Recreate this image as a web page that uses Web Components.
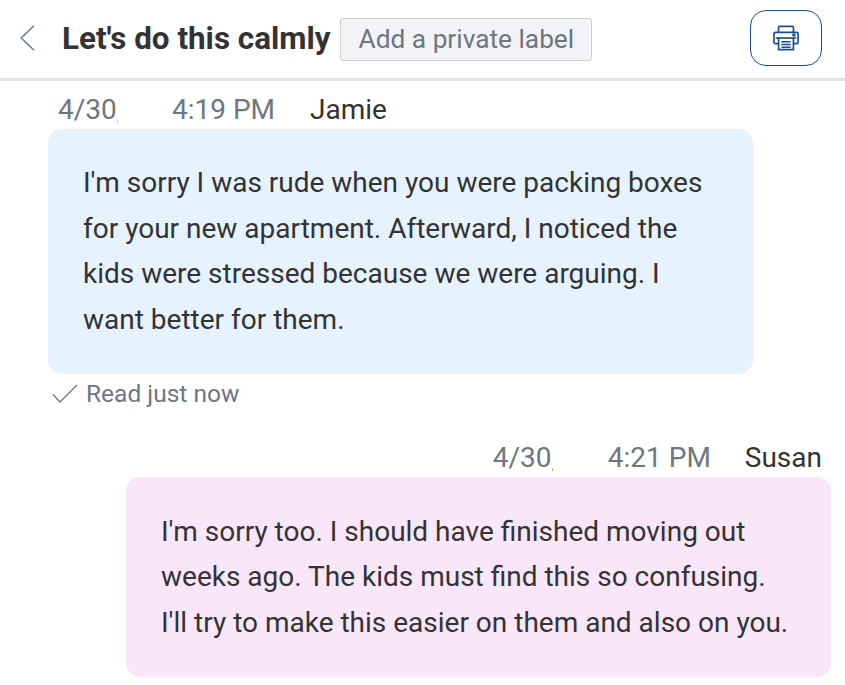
<!DOCTYPE html>
<html><head><meta charset="utf-8">
<style>
html,body{margin:0;padding:0;background:#fff;overflow:hidden}
body{font-family:Roboto,"Liberation Sans",sans-serif;width:845px;height:685px}
</style></head><body>
<template id="t-header">
<style>
:host{display:flex;align-items:center;box-sizing:border-box;height:81px;border-bottom:3px solid #e3e3e3;padding:0 23px 3px 20px;background:#fff}
.back{width:15px;height:26px;display:block;flex:none}
h1{margin:2px 0 0 27px;font:700 31.4px/40px Roboto,sans-serif;color:#333;white-space:nowrap}
.label{margin:3px 0 0 9px;box-sizing:border-box;height:43px;width:252px;display:flex;align-items:center;padding:0 0 1px 18px;background:#f2f3f7;border:1px solid #ccc;border-radius:3px;font-size:26.250px;color:#6e7681;white-space:nowrap}
.print{margin-left:auto;box-sizing:border-box;width:72px;height:56px;border:1px solid #1e4c94;border-radius:16px;display:flex;align-items:center;justify-content:center;background:#fff}
</style>
<svg class="back" viewBox="0 0 15 26" fill="none" stroke="#5f7389" stroke-width="1.3"><path d="M14 .8 1.2 13 14 25.2"/></svg>
<h1><slot name="title"></slot></h1>
<div class="label"><slot name="label"></slot></div>
<div class="print"><svg width="26" height="26" viewBox="0 0 28 28" fill="none" stroke="#1e4c94" stroke-width="1.8"><path d="M6 8V2.5a1 1 0 0 1 1-1h14a1 1 0 0 1 1 1V8"/><path d="M6 20H2.5a1.500 1.500 0 0 1-1.500-1.500V9.500A1.500 1.500 0 0 1 2.500 8h23a1.500 1.500 0 0 1 1.500 1.500v9a1.500 1.500 0 0 1-1.500 1.500H22"/><path d="M3 14h22"/><path d="M6 14v12.500h16V14"/><path d="M9 18h10M9 21h10M9 24h10" stroke-width="1.500"/><circle cx="22.500" cy="10.800" r="1.900" fill="#1e4c94" stroke="none"/></svg></div>
</template>

<template id="t-meta">
<style>
:host{display:flex;font-size:28px;line-height:30px;color:#333;white-space:nowrap}
.date{color:#6f7680;width:var(--date-w);flex:none}
.date i{display:block;font-style:normal;width:60px;overflow:hidden}
.time{color:#6f7680;width:var(--time-w);flex:none}
</style>
<span class="date"><i><slot name="date"></slot></i></span><span class="time"><slot name="time"></slot></span><span><slot name="name"></slot></span>
</template>

<template id="t-bubble">
<style>
:host{display:block;box-sizing:border-box;border-radius:14px;font-size:28px;line-height:45.500px;color:#333;background:var(--bg);padding:var(--pad,31px 35px 32px)}
</style><slot></slot>
</template>

<template id="t-receipt">
<style>
:host{display:flex;align-items:center;font-size:24.500px;line-height:30px;color:#6f7680}
svg{width:26px;height:20px;margin:0 8px 0 1px;flex:none}
</style>
<svg viewBox="0 0 26 20" fill="none" stroke="#6f7680" stroke-width="1.300"><path d="M1 10.500 8 18 25 1"/></svg><slot></slot>
</template>

<template id="t-thread">
<style>
:host{display:flex;flex-direction:column;padding:0 14px 0 48px}
</style><slot></slot>
</template>

<x-header><span slot="title">Let's do this calmly</span><span slot="label">Add a private label</span></x-header>
<x-thread>
  <x-meta style="margin:14px 0 -1px 10px;--date-w:114px;--time-w:138px"><span slot="date">4/30,</span><span slot="time">4:19 PM</span><span slot="name">Jamie</span></x-meta>
  <x-bubble style="--bg:#e6f2fe;margin-top:5px;width:705px">I'm sorry I was rude when you were packing boxes<br>for your new apartment. Afterward, I noticed the<br>kids were stressed because we were arguing. I<br>want better for them.</x-bubble>
  <x-receipt style="margin:5px 0 0 3px">Read just now</x-receipt>
  <x-meta style="margin:34px 9px -1px 0;align-self:flex-end;--date-w:115px;--time-w:137px"><span slot="date">4/30,</span><span slot="time">4:21 PM</span><span slot="name">Susan</span></x-meta>
  <x-bubble style="--bg:#f9e7f9;--pad:31.5px 35px 31.5px;margin:5px 0 0 78px;width:705px">I'm sorry too. I should have finished moving out<br>weeks ago. The kids must find this so confusing.<br>I'll try to make this easier on them and also on you.</x-bubble>
</x-thread>
<script>
for (const [n,t] of [['x-header','t-header'],['x-meta','t-meta'],['x-bubble','t-bubble'],['x-receipt','t-receipt'],['x-thread','t-thread']]) {
  customElements.define(n, class extends HTMLElement {
    constructor(){super();this.attachShadow({mode:'open'}).appendChild(document.getElementById(t).content.cloneNode(true));}
  });
}
</script>
</body></html>
